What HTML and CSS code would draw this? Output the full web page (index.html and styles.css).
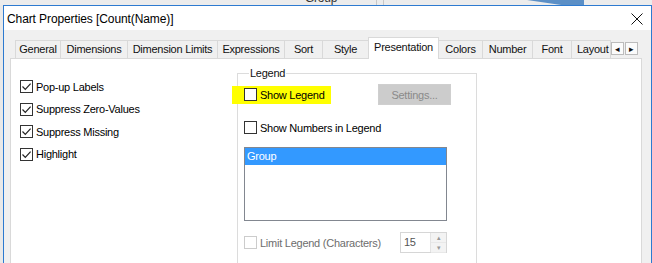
FILE: index.html
```html
<!DOCTYPE html>
<html lang="en">
<head>
  <meta charset="UTF-8">
  <title>Chart Properties</title>
  <link rel="stylesheet" href="styles.css">
</head>
<body>
  <div class="backdrop">
    <span class="bg-label">Group</span>
    <span class="bg-split"></span>
    <span class="bg-slice"></span>
  </div>

  <div class="window">
    <div class="titlebar">
      <span class="title">Chart Properties [Count(Name)]</span>
      <svg class="close" width="12" height="12" viewBox="0 0 12 12">
        <path d="M0.5 0.5 L11.5 11.5 M11.5 0.5 L0.5 11.5" stroke="#111" stroke-width="1"/>
      </svg>
    </div>

    <div class="client">
      <div class="tabs">
        <span class="tab t-general">General</span>
        <span class="tab t-dims">Dimensions</span>
        <span class="tab t-limits">Dimension Limits</span>
        <span class="tab t-expr">Expressions</span>
        <span class="tab t-sort">Sort</span>
        <span class="tab t-style">Style</span>
        <span class="tab active t-pres">Presentation</span>
        <span class="tab t-colors">Colors</span>
        <span class="tab t-number">Number</span>
        <span class="tab t-font">Font</span>
        <span class="tab last t-layout">Layout</span>
        <span class="scroll">
          <span class="scroll-btn">&#9666;</span>
          <span class="scroll-btn">&#9656;</span>
        </span>
      </div>

      <div class="panel">
        <div class="options">
          <label class="check"><span class="box checked"></span>Pop-up Labels</label>
          <label class="check"><span class="box checked"></span>Suppress Zero-Values</label>
          <label class="check"><span class="box checked"></span>Suppress Missing</label>
          <label class="check"><span class="box checked"></span>Highlight</label>
        </div>

        <fieldset class="legend-group">
          <legend>Legend</legend>
          <div class="legend-row">
            <label class="check marked"><span class="box"></span>Show Legend</label>
            <span class="button disabled">Settings...</span>
          </div>
          <label class="check numbers"><span class="box"></span>Show Numbers in Legend</label>
          <div class="listbox">
            <div class="item selected">Group</div>
          </div>
          <div class="limit-row">
            <label class="check disabled"><span class="box"></span>Limit Legend (Characters)</label>
            <span class="spin">
              <span class="spin-value">15</span>
              <span class="spin-btns">
                <span class="spin-btn">&#9652;</span>
                <span class="spin-btn">&#9662;</span>
              </span>
            </span>
          </div>
        </fieldset>
      </div>
    </div>
  </div>
</body>
</html>
```

FILE: styles.css
```css
* {
  box-sizing: border-box;
}

body {
  margin: 0;
  width: 652px;
  height: 263px;
  overflow: hidden;
  background-color: #e9e9e9;
  font-family: 'Liberation Sans', Arial, sans-serif;
  font-size: 11px;
  letter-spacing: -0.25px;
  color: #000;
}

.backdrop {
  position: relative;
  height: 5px;
  overflow: hidden;
  background-color: #ececec;
}

.bg-label {
  position: absolute;
  left: 305px;
  top: -9px;
  font-size: 12px;
  color: #333;
}

.bg-split {
  position: absolute;
  left: 376px;
  top: 0;
  width: 8px;
  height: 5px;
  border-left: 1px solid #c8c8c8;
  border-right: 1px solid #c8c8c8;
}

.bg-slice {
  position: absolute;
  left: 527px;
  top: 0;
  width: 57px;
  height: 5px;
  background-color: #5b8fc6;
  clip-path: polygon(0 0, 100% 0, 100% 100%, 60% 100%);
}

.window {
  margin-left: 3px;
  width: 649px;
  height: 258px;
  border: 1px solid #2d7ad0;
  border-bottom: none;
  background-color: #f0f0f0;
}

.titlebar {
  display: flex;
  align-items: center;
  justify-content: space-between;
  height: 24px;
  padding: 0 8px 0 3px;
  background-color: #fff;
}

.title {
  font-size: 12px;
  letter-spacing: -0.1px;
  padding-top: 1px;
}

.close {
  margin-top: 1px;
}

.client {
  padding: 7px 9px 0 6px;
}

.tabs {
  display: flex;
  align-items: flex-end;
  height: 21px;
  padding-left: 5px;
}

.tab {
  height: 18px;
  line-height: 17px;
  text-align: center;
  border: 1px solid #d9d9d9;
  border-bottom: none;
  border-right: none;
  background-color: #f0f0f0;
  color: #111;
  white-space: nowrap;
  overflow: hidden;
}

.t-general { width: 45px; }
.t-dims { width: 67px; }
.t-limits { width: 90px; }
.t-expr { width: 67px; }
.t-sort { width: 38px; }
.t-style { width: 46px; }
.t-pres { width: 71px; }
.t-colors { width: 43px; }
.t-number { width: 50px; }
.t-font { width: 39px; }
.t-layout { width: 40px; text-align: left; padding-left: 5px; }

.tab.last {
  border-right: 1px solid #d9d9d9;
}

.tab.active {
  height: 22px;
  line-height: 18px;
  background-color: #fff;
  border-right: 1px solid #d9d9d9;
  position: relative;
  z-index: 1;
  margin-bottom: -1px;
}

.tab.active + .tab {
  border-left: none;
}

.scroll {
  display: flex;
  align-self: center;
  margin-top: 2px;
}

.scroll-btn {
  width: 13px;
  height: 13px;
  line-height: 12px;
  font-size: 9px;
  text-align: center;
  background-color: #fbfbfb;
  border: 1px solid #bcbcbc;
  margin-right: 1px;
  color: #111;
}

.panel {
  display: flex;
  height: 210px;
  border: 1px solid #d9d9d9;
  background-color: #fff;
}

.options {
  display: flex;
  flex-direction: column;
  gap: 9.5px;
  width: 226px;
  padding: 21px 0 0 9px;
}

.check {
  display: flex;
  align-items: center;
  gap: 3px;
  height: 13px;
  white-space: nowrap;
}

.box {
  width: 13px;
  height: 13px;
  border: 1px solid #333;
  background-color: #fff;
  flex-shrink: 0;
}

.box.checked {
  background: #fff url("data:image/svg+xml;utf8,<svg xmlns='http://www.w3.org/2000/svg' width='11' height='11'><path d='M1.5 5.5 L4.3 8.3 L9.6 2.6' fill='none' stroke='%23222' stroke-width='1.2'/></svg>") no-repeat;
}

.legend-group {
  width: 240px;
  margin: 8px 0 0 0;
  padding: 5px 6px 0 6px;
  border: 1px solid #dcdcdc;
  border-bottom: none;
  min-width: 0;
}

.legend-group legend {
  padding: 0 1px;
  margin-left: 5px;
  color: #111;
}

.legend-row {
  display: flex;
  align-items: center;
  justify-content: space-between;
  height: 21px;
  padding-right: 19px;
}

.check.marked {
  background-color: #ffff00;
  margin-left: -12px;
  padding: 3px 6px 3px 12px;
  height: 18px;
}

.button {
  width: 73px;
  height: 21px;
  line-height: 20px;
  text-align: center;
  border: 1px solid #cfcfcf;
  background-color: #cccccc;
  color: #8a8a8a;
}

.check.numbers {
  margin-top: 16px;
}

.listbox {
  width: 203px;
  height: 74px;
  margin-top: 13px;
  border: 1px solid #828790;
  background-color: #fff;
}

.item {
  height: 17px;
  line-height: 17px;
  padding-left: 2px;
}

.item.selected {
  background-color: #3399ff;
  color: #fff;
}

.limit-row {
  display: flex;
  align-items: center;
  justify-content: space-between;
  width: 203px;
  margin-top: 11px;
}

.check.disabled {
  color: #6d6d6d;
}

.check.disabled .box {
  border-color: #cccccc;
}

.spin {
  display: flex;
  width: 47px;
  height: 21px;
  border: 1px solid #d6d6d6;
  background-color: #fff;
}

.spin-value {
  flex: 1;
  line-height: 19px;
  padding-left: 3px;
  color: #555;
}

.spin-btns {
  display: flex;
  flex-direction: column;
  width: 16px;
  border-left: 1px solid #e3e3e3;
}

.spin-btn {
  flex: 1;
  font-size: 7px;
  line-height: 9px;
  text-align: center;
  color: #999;
  background-color: #f3f3f3;
  border-bottom: 1px solid #e8e8e8;
}
```
